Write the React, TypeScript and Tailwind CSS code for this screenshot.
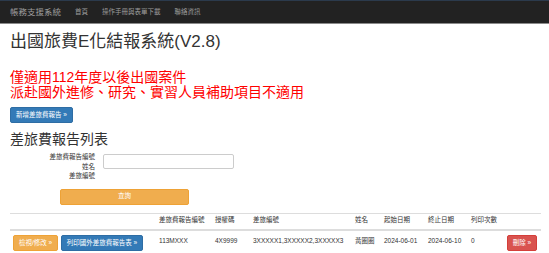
const font = { fontFamily: '"Liberation Sans", "Noto Sans CJK TC", sans-serif' }

function Btn({ color, children, className = '' }: { color: 'primary' | 'warning' | 'danger'; children: React.ReactNode; className?: string }) {
  const colors = {
    primary: 'bg-[#337ab7] border-[#2e6da4]',
    warning: 'bg-[#f0ad4e] border-[#eea236]',
    danger: 'bg-[#d9534f] border-[#d43f3a]',
  }
  return (
    <button className={`h-[16px] rounded-[2px] border text-white text-[6.5px] leading-none whitespace-nowrap ${colors[color]} ${className}`}>
      {children}
    </button>
  )
}

const headers = ['差旅費報告編號', '授權碼', '差旅編號', '姓名', '起始日期', '終止日期', '列印次數']
const row = ['113MXXX', '4X9999', '3XXXXX1,3XXXXX2,3XXXXX3', '黃圈圈', '2024-06-01', '2024-06-10', '0']

export default function App() {
  return (
    <div className="min-h-screen bg-white text-[#333]" style={font}>
      {/* navbar */}
      <nav className="h-[24px] bg-[#222] border-t border-t-[#2b3a4c] border-b border-b-[#8a8a8a] flex items-center pl-[10px]">
        <span className="text-[8.5px] text-[#9d9d9d] mr-[7px]">帳務支援系統</span>
        <a className="px-[7px] text-[6.5px] text-[#9d9d9d]">首頁</a>
        <a className="px-[7px] text-[6.5px] text-[#9d9d9d]">操作手冊與表單下載</a>
        <a className="px-[7px] text-[6.5px] text-[#9d9d9d]">聯絡資訊</a>
      </nav>

      <div className="pl-[10px] pr-[8px]">
        <h1 className="mt-[9px] text-[17px] leading-[1.1]">出國旅費E化結報系統(V2.8)</h1>

        <div className="mt-[18px] text-[14px] leading-[15px] text-[#ff0000]">
          <div>僅適用112年度以後出國案件</div>
          <div>派赴國外進修、研究、實習人員補助項目不適用</div>
        </div>

        <Btn color="primary" className="mt-[6px] w-[63px]">新增差旅費報告 »</Btn>

        <h2 className="mt-[8px] text-[14px] leading-[1.1]">差旅費報告列表</h2>

        {/* search form */}
        <div className="mt-[5px] flex gap-[8px]">
          <div className="w-[85px] text-right text-[6.5px] leading-[9.5px]">
            <div>差旅費報告編號</div>
            <div>姓名</div>
            <div>差旅編號</div>
          </div>
          <input className="mt-[2px] w-[131px] h-[15px] border border-[#ccc] rounded-[2px] bg-white" />
        </div>
        <Btn color="warning" className="mt-[8px] ml-[50px] w-[129px]">查詢</Btn>

        {/* list */}
        <table className="mt-[8px] w-full table-fixed border-collapse text-[6.5px]">
          <colgroup>
            <col className="w-[145px]" />
            <col className="w-[56px]" />
            <col className="w-[38px]" />
            <col className="w-[102px]" />
            <col className="w-[29px]" />
            <col className="w-[44px]" />
            <col className="w-[43px]" />
            <col className="w-[36px]" />
            <col className="w-[38px]" />
          </colgroup>
          <thead>
            <tr className="h-[16px] border-t border-[#ddd] border-b-2 border-b-[#ddd]">
              <th />
              {headers.map(h => (
                <th key={h} className="px-[4px] pb-[4px] align-bottom text-left font-normal whitespace-nowrap">{h}</th>
              ))}
              <th />
            </tr>
          </thead>
          <tbody>
            <tr className="border-b border-[#ddd]">
              <td className="pl-[3px] py-[4px] align-top">
                <div className="flex gap-[3px]">
                  <Btn color="warning" className="w-[45px]">檢視/修改 »</Btn>
                  <Btn color="primary" className="w-[82px]">列印國外差旅費報告表 »</Btn>
                </div>
              </td>
              {row.map((v, i) => (
                <td key={i} className="px-[4px] pt-[5px] pb-[4px] align-top whitespace-nowrap">{v}</td>
              ))}
              <td className="px-[4px] py-[4px] align-top">
                <Btn color="danger" className="w-[30px]">刪除 »</Btn>
              </td>
            </tr>
          </tbody>
        </table>
      </div>
    </div>
  )
}
